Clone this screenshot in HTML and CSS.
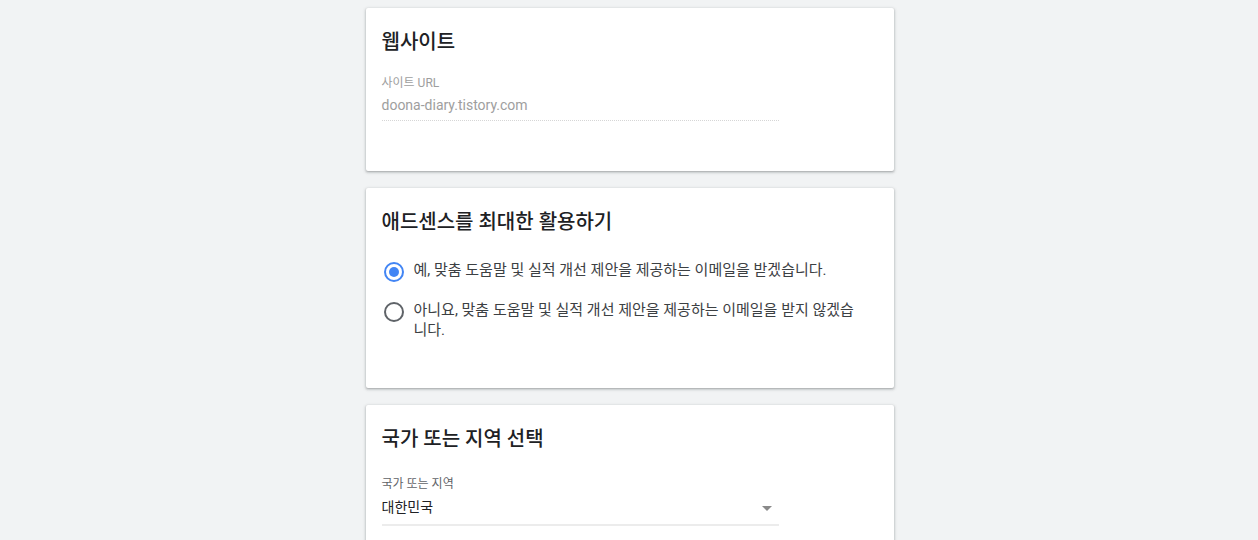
FILE: index.html
```html
<!DOCTYPE html>
<html>
<head>
  <title>애드센스 가입</title>
  <meta name="viewport" content="width=device-width, initial-scale=1">
  <link rel="stylesheet" href="styles.css">
</head>
<body>
  <div class="page">
    <div class="card">
      <h2 class="card-title">웹사이트</h2>
      <div class="field field-disabled">
        <span class="field-label">사이트 URL</span>
        <span class="field-value">doona-diary.tistory.com</span>
      </div>
    </div>

    <div class="card card-radios">
      <h2 class="card-title">애드센스를 최대한 활용하기</h2>
      <label class="radio-row">
        <input type="radio" name="mail" checked><span class="radio"></span>
        <span class="radio-text">예, 맞춤 도움말 및 실적 개선 제안을 제공하는 이메일을 받겠습니다.</span>
      </label>
      <label class="radio-row">
        <input type="radio" name="mail"><span class="radio"></span>
        <span class="radio-text">아니요, 맞춤 도움말 및 실적 개선 제안을 제공하는 이메일을 받지 않겠습니다.</span>
      </label>
    </div>

    <div class="card">
      <h2 class="card-title">국가 또는 지역 선택</h2>
      <div class="field field-select">
        <span class="field-label">국가 또는 지역</span>
        <span class="field-value">대한민국<span class="arrow"></span></span>
      </div>
    </div>
  </div>
</body>
</html>
```

FILE: styles.css
```css
body { margin:0; background:#f1f3f4; font-family:Roboto,"Noto Sans CJK KR",sans-serif; color:#202124; }
.page { width:528px; margin:0 auto; padding:8px 0 0 1px; display:flex; flex-direction:column; gap:17px; }
.card { background:white; border-radius:2px; padding:24px 16px 50px;
        box-shadow:0 1px 2px rgba(60,64,67,0.3), 0 1px 3px 1px rgba(60,64,67,0.15); }
.card-title { margin:0; font-size:20px; line-height:20px; font-weight:500; color:#202124; }

.field { width:397px; margin-top:23px; display:flex; flex-direction:column; }
.field-label { font-size:12px; line-height:16px; color:#9e9e9e; }
.field-value { font-size:14px; line-height:20px; margin-top:4px; padding-bottom:5px; position:relative; }
.field-disabled .field-value { color:#9e9e9e; border-bottom:1px dotted #d6d6d6; }
.field-select { margin-top:27px; }
.field-select .field-label { color:#5f6368; }
.field-select .field-value { color:#202124; margin-top:5px; padding-bottom:7px; border-bottom:2px solid #ececec; }
.arrow { position:absolute; right:7px; top:9px; width:0; height:0;
         border-left:5px solid transparent; border-right:5px solid transparent; border-top:5px solid #8a8a8a; }

.card-radios { padding-bottom:48px; }
.radio-row { display:flex; align-items:flex-start; gap:10px; margin-top:20px; cursor:pointer; padding-left:2px; }
.card-radios .card-title + .radio-row { margin-top:30px; }
.radio-row input { display:none; }
.radio { flex:none; width:16px; height:16px; border:2px solid #5f6368; border-radius:50%; margin-top:0; position:relative; }
.radio-row input:checked + .radio { border-color:#4285f4; }
.radio-row input:checked + .radio:before { content:""; position:absolute; left:3px; top:3px; width:10px; height:10px;
                                            border-radius:50%; background:#4285f4; }
.radio-text { font-size:15px; line-height:20px; color:#3c4043; max-width:450px; margin-top:-2px; }
```
